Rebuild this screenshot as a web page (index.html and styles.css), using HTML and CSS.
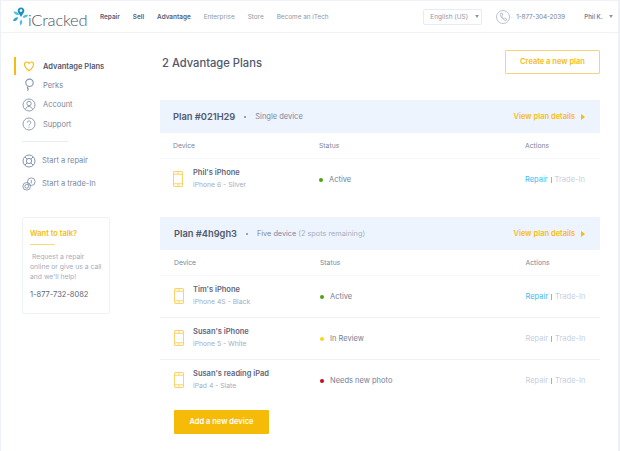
FILE: index.html
```html
<!DOCTYPE html>
<html lang="en">
<head>
    <meta charset="UTF-8">
    <meta name="viewport" content="width=device-width, initial-scale=1.0">
    <title>iCracked - Advantage Plans</title>
    <link rel="stylesheet" href="styles.css">
</head>
<body>
    <div class="page">
        <header class="topbar">
            <a class="logo">
                <svg width="15" height="19" viewBox="0 0 15 19">
                    <path d="M8 .5C6 .5 4.700 2 4.700 3.700 4.700 5.800 6.700 7.300 8 10 9.300 7.300 11.300 5.800 11.300 3.700 11.300 2 10 .5 8 .5z" fill="#1f8fbc"/>
                    <circle cx="8" cy="3.600" r="1.300" fill="#fff"/>
                    <path d="M.5 4.500c2.500-.3 4.700.9 5.600 3.200-2.500.8-4.700-.3-5.600-3.200z" fill="#45c0e8"/>
                    <path d="M0 14c.6-2.500 2.700-3.900 5.200-3.600-.7 2.500-2.700 4.100-5.200 3.600z" fill="#2aa5d2"/>
                    <path d="M7.500 18.500c-1.200-2-.8-4.300 .9-5.900 1.200 2.100.8 4.500-.9 5.900z" fill="#45c0e8"/>
                    <path d="M15 8c-2.200-.6-4.200.2-5.400 2.200 2 1.100 4.200.5 5.400-2.200z" fill="#45c0e8"/>
                </svg>
                <span class="logo-text">iCracked</span>
            </a>
            <nav class="mainnav">
                <a class="strong">Repair</a>
                <a class="strong">Sell</a>
                <a class="strong">Advantage</a>
                <a>Enterprise</a>
                <a>Store</a>
                <a>Become an iTech</a>
            </nav>
            <div class="lang">English (US) <i class="caret"></i></div>
            <div class="phone">
                <svg width="14" height="14" viewBox="0 0 14 14" fill="none" stroke="#a9b4c8" stroke-width=".8">
                    <circle cx="7" cy="7" r="6.500"/>
                    <path d="M4.500 3.500c-.8 2.800 2.400 6.800 5.600 7l.6-1.500-1.900-1.100-.8.800C7 8 6 6.700 5.800 5.500l1-.5L6 3z"/>
                </svg>
                <span>1-877-304-2039</span>
            </div>
            <div class="user">Phil K. <i class="caret"></i></div>
        </header>

        <div class="content">
            <aside class="sidebar">
                <ul class="sidenav">
                    <li class="active">
                        <svg width="14" height="14" viewBox="0 0 14 14" fill="none" stroke="#f5bc13" stroke-width="1.100">
                            <path d="M7 11.800C4 9.500 2.500 7.700 2.500 5.500 2.500 4 3.600 3 4.800 3 5.800 3 6.600 3.600 7 4.500 7.400 3.600 8.200 3 9.200 3 10.400 3 11.500 4 11.500 5.500 11.500 7.700 10 9.500 7 11.800z"/>
                        </svg>
                        Advantage Plans
                    </li>
                    <li>
                        <svg width="14" height="14" viewBox="0 0 14 14" fill="none" stroke="#8594ae" stroke-width="1.100">
                            <circle cx="7.500" cy="4.800" r="3.700"/>
                            <path d="M6.300 8.500l-1 1.500 1 .9-.8 1.900"/>
                        </svg>
                        Perks
                    </li>
                    <li>
                        <svg width="14" height="14" viewBox="0 0 14 14" fill="none" stroke="#8594ae" stroke-width=".9">
                            <circle cx="7" cy="7" r="6"/>
                            <circle cx="7" cy="5.500" r="2.200"/>
                            <path d="M3.500 11.500c.5-2 1.800-3 3.500-3s3 1 3.500 3"/>
                        </svg>
                        Account
                    </li>
                    <li>
                        <svg width="14" height="14" viewBox="0 0 14 14" fill="none" stroke="#8594ae" stroke-width=".9">
                            <circle cx="7" cy="7" r="6"/>
                            <path d="M5.200 5.600C5.300 4.500 6 4 7 4s1.800.6 1.800 1.600C8.800 7 7 7 7 8.500M7 9.700v1"/>
                        </svg>
                        Support
                    </li>
                </ul>
                <div class="sidediv"></div>
                <ul class="sideactions">
                    <li>
                        <svg width="14" height="14" viewBox="0 0 14 14" fill="none" stroke="#8594ae" stroke-width="1">
                            <circle cx="7" cy="7" r="6"/>
                            <circle cx="7" cy="7" r="2.600"/>
                            <path d="M3 3l2.200 2.200M11 3L8.800 5.200M3 11l2.200-2.200M11 11L8.800 8.800"/>
                        </svg>
                        Start a repair
                    </li>
                    <li>
                        <svg width="14" height="14" viewBox="0 0 14 14" fill="none" stroke="#8594ae" stroke-width=".9">
                            <circle cx="9.300" cy="4.700" r="3.800"/>
                            <circle cx="4.700" cy="9.300" r="3.800"/>
                            <circle cx="4.700" cy="9.300" r="1.900"/>
                            <path d="M9.300 3v3.400"/>
                        </svg>
                        Start a trade-In
                    </li>
                </ul>
                <div class="talk">
                    <h4>Want to talk?</h4>
                    <p>&nbsp;Request a repair<br>online or give us a call<br>and we'll help!</p>
                    <div class="talk-phone">1-877-732-8082</div>
                </div>
            </aside>

            <main class="main">
                <div class="titlebar">
                    <h1>2 Advantage Plans</h1>
                    <a class="btn-outline">Create a new plan</a>
                </div>

                <section class="plan">
                    <div class="plan-head">
                        <span class="plan-name">Plan #021H29</span>
                        <span class="dot-sep"></span>
                        <span class="plan-type">Single device</span>
                        <a class="plan-link">View plan details <i class="arrow"></i></a>
                    </div>
                    <div class="row row-head">
                        <span>Device</span><span>Status</span><span>Actions</span>
                    </div>
                    <div class="row row-device">
                        <div class="device">
                            <svg class="phone-icon" width="10" height="16" viewBox="0 0 10 16" fill="none" stroke="#fad36a" stroke-width="1.100">
                                <rect x=".5" y=".5" width="9" height="15" rx="1.500"/>
                                <path d="M.5 3.200h9M.5 12.800h9M5 .5v2.700M5 12.800v2.700"/>
                            </svg>
                            <div><b>Phil's iPhone</b><small>iPhone 6 - Silver</small></div>
                        </div>
                        <div class="status"><i class="green"></i>Active</div>
                        <div class="actions"><a class="live">Repair</a><em></em><a>Trade-In</a></div>
                    </div>
                </section>

                <section class="plan plan-two">
                    <div class="plan-head">
                        <span class="plan-name">Plan #4h9gh3</span>
                        <span class="dot-sep"></span>
                        <span class="plan-type">Five device <span class="muted">(2 spots remaining)</span></span>
                        <a class="plan-link">View plan details <i class="arrow"></i></a>
                    </div>
                    <div class="row row-head">
                        <span>Device</span><span>Status</span><span>Actions</span>
                    </div>
                    <div class="row row-device line">
                        <div class="device">
                            <svg class="phone-icon" width="10" height="16" viewBox="0 0 10 16" fill="none" stroke="#fad36a" stroke-width="1.100">
                                <rect x=".5" y=".5" width="9" height="15" rx="1.500"/>
                                <path d="M.5 3.200h9M.5 12.800h9M5 .5v2.700M5 12.800v2.700"/>
                            </svg>
                            <div><b>Tim's iPhone</b><small>iPhone 4S - Black</small></div>
                        </div>
                        <div class="status"><i class="green"></i>Active</div>
                        <div class="actions"><a class="live">Repair</a><em></em><a>Trade-In</a></div>
                    </div>
                    <div class="row row-device line">
                        <div class="device">
                            <svg class="phone-icon" width="10" height="16" viewBox="0 0 10 16" fill="none" stroke="#fad36a" stroke-width="1.100">
                                <rect x=".5" y=".5" width="9" height="15" rx="1.500"/>
                                <path d="M.5 3.200h9M.5 12.800h9M5 .5v2.700M5 12.800v2.700"/>
                            </svg>
                            <div><b>Susan's iPhone</b><small>iPhone 5 - White</small></div>
                        </div>
                        <div class="status"><i class="yellow"></i>In Review</div>
                        <div class="actions"><a>Repair</a><em></em><a>Trade-In</a></div>
                    </div>
                    <div class="row row-device">
                        <div class="device">
                            <svg class="phone-icon" width="10" height="16" viewBox="0 0 10 16" fill="none" stroke="#fad36a" stroke-width="1.100">
                                <rect x=".5" y=".5" width="9" height="15" rx="1.500"/>
                                <path d="M.5 3.200h9M.5 12.800h9M5 .5v2.700M5 12.800v2.700"/>
                            </svg>
                            <div><b>Susan's reading iPad</b><small>iPad 4 - Slate</small></div>
                        </div>
                        <div class="status"><i class="red"></i>Needs new photo</div>
                        <div class="actions"><a>Repair</a><em></em><a>Trade-In</a></div>
                    </div>
                    <a class="btn-solid">Add a new device</a>
                </section>
            </main>
        </div>
    </div>
</body>
</html>
```
FILE: styles.css
```css
html, body {
    margin: 0;
    height: 100%;
    overflow: hidden;
    background-color: #fff;
}
body {
    font-family: Inter, "Open Sans", sans-serif;
    font-size: 8px;
    color: #6f7b92;
    white-space: nowrap;
}
.page {
    width: 620px;
    height: 451px;
    box-sizing: border-box;
    border-top: 1px solid #f0f2f7;
    border-left: 1px solid #edf0f6;
    border-right: 2px solid #edf0f6;
    overflow: hidden;
}
ul {
    list-style: none;
    margin: 0;
    padding: 0;
}

/* top bar */
.topbar {
    display: flex;
    align-items: center;
    height: 32px;
    box-sizing: border-box;
    border-bottom: 1px solid #f0f2f7;
    padding-left: 12px;
}
.logo {
    display: flex;
    align-items: center;
    width: 87px;
    flex-shrink: 0;
}
.logo-text {
    font-family: Lato, sans-serif;
    font-size: 16.500px;
    font-weight: 300;
    color: #4a5364;
    line-height: 20px;
    margin: 6px 0 0 0;
    letter-spacing: -.2px;
}
.mainnav {
    display: flex;
    gap: 13px;
    font-size: 6.400px;
    color: #8d97aa;
}
.mainnav .strong {
    color: #566076;
    font-weight: 600;
}
.lang {
    margin-left: auto;
    width: 59px;
    height: 16px;
    flex-shrink: 0;
    box-sizing: border-box;
    border: 1px solid #e6ebf4;
    border-radius: 2px;
    font-size: 6.500px;
    line-height: 14px;
    padding-left: 6px;
    color: #8d97aa;
}
.caret {
    display: inline-block;
    border-left: 2px solid transparent;
    border-right: 2px solid transparent;
    border-top: 3px solid #8d9ab5;
    margin-left: 5px;
    vertical-align: 1px;
}
.phone {
    display: flex;
    align-items: center;
    gap: 6px;
    margin-left: 14px;
    font-size: 6.500px;
    letter-spacing: -.2px;
    color: #7a859b;
}
.user {
    margin: 0 5px 0 19.500px;
    font-size: 6px;
    font-weight: 600;
    color: #7a859b;
}

/* sidebar */
.content {
    display: flex;
}
.sidebar {
    width: 159px;
    flex-shrink: 0;
    padding-top: 24px;
    box-sizing: border-box;
}
.sidenav li,
.sideactions li {
    display: flex;
    align-items: center;
    font-size: 7.500px;
    color: #7b869c;
}
.sidenav li {
    height: 19.500px;
    margin-left: 13px;
    padding-left: 6px;
    gap: 7px;
    border-left: 2px solid transparent;
}
.sidenav li.active {
    border-left-color: #f5bc13;
    font-weight: 600;
    color: #4f586c;
    height: 18px;
    margin-bottom: .5px;
}
.sidediv {
    width: 46px;
    height: 1px;
    background-color: #e8ecf4;
    margin: 7px 0 0 21px;
}
.sideactions {
    margin-top: 7px;
    padding-left: 21px;
}
.sideactions li {
    height: 23px;
    gap: 6px;
}
.talk {
    width: 88px;
    height: 97px;
    box-sizing: border-box;
    margin: 22px 0 0 21px;
    padding: 11px 7px 0;
    border: 1px solid #eef2f9;
    border-radius: 2px;
}
.talk h4 {
    margin: 0;
    font-size: 7.500px;
    font-weight: 600;
    color: #f5bc13;
}
.talk h4::after {
    content: "";
    display: block;
    width: 25px;
    height: 1px;
    background-color: #f9da7a;
    margin-top: 6px;
}
.talk p {
    margin: 7px 0 0;
    font-size: 6.800px;
    line-height: 10px;
    color: #a3aec2;
}
.talk-phone {
    margin-top: 8px;
    font-size: 7.500px;
    color: #5d667a;
}

/* main column */
.main {
    width: 440px;
}
.titlebar {
    display: flex;
    justify-content: space-between;
    align-items: center;
    height: 24px;
    margin-top: 17px;
}
.titlebar h1 {
    margin: 1px 0 0 2px;
    font-size: 11.200px;
    font-weight: 500;
    color: #4f586c;
}
.btn-outline {
    width: 95px;
    height: 24px;
    box-sizing: border-box;
    border: 1px solid #f8d27b;
    border-radius: 1px;
    font-size: 7.500px;
    font-weight: 600;
    line-height: 22px;
    text-align: center;
    color: #f5bc13;
}
.plan {
    margin-top: 26px;
}
.plan-two {
    margin-top: 17px;
}
.plan-head {
    display: flex;
    align-items: center;
    height: 33px;
    background-color: #eef4fd;
    padding-left: 13px;
    box-sizing: border-box;
}
.plan-name {
    font-size: 9.300px;
    font-weight: 600;
    color: #505a6e;
}
.dot-sep {
    width: 2px;
    height: 2px;
    border-radius: 50%;
    background-color: #7b869c;
    margin: 0 9px;
}
.plan-type {
    font-size: 7.500px;
    color: #7b869c;
}
.plan-two .plan-type {
    font-size: 7.300px;
}
.muted {
    color: #a3aec2;
}
.plan-link {
    margin-left: auto;
    margin-right: 15px;
    font-size: 7.500px;
    font-weight: 600;
    color: #f5bc13;
}
.arrow {
    display: inline-block;
    border-top: 3px solid transparent;
    border-bottom: 3px solid transparent;
    border-left: 4px solid #f5bc13;
    margin-left: 4px;
    vertical-align: -1px;
}
.row {
    display: grid;
    grid-template-columns: 146px 206px 1fr;
    align-items: center;
    padding-left: 13px;
}
.row-head {
    height: 25px;
    border-bottom: 1px solid #f5f7fb;
    font-size: 6.800px;
    color: #7b869c;
}
.row-device {
    height: 41px;
    font-size: 7.500px;
}
.row-device.line {
    border-bottom: 1px solid #eff1f6;
}
.plan-two .plan-head,
.plan-two .row {
    padding-left: 14px;
}
.plan-two .row {
    grid-template-columns: 146px 205.500px 1fr;
}
.device {
    display: flex;
    align-items: center;
    gap: 10px;
    margin-bottom: 2px;
}
.plan-two .device {
    gap: 9px;
}
.device b {
    display: block;
    font-size: 7.500px;
    font-weight: 600;
    color: #5d667a;
}
.device small {
    display: block;
    margin-top: 3px;
    font-size: 6.800px;
    color: #a3aec2;
}
.status {
    display: flex;
    align-items: center;
    color: #737e94;
}
.status i {
    width: 4px;
    height: 4px;
    border-radius: 50%;
    margin-right: 6px;
}
.green { background-color: #4fa30c; }
.yellow { background-color: #f6d90f; }
.red { background-color: #c8081c; }
.actions {
    display: flex;
    align-items: center;
    color: #c6cfdd;
}
.actions .live {
    color: #3dbcf0;
}
.actions em {
    width: 1px;
    height: 6px;
    background-color: #a3aec2;
    margin: 0 3px;
}
.btn-solid {
    display: block;
    width: 95px;
    height: 24px;
    margin: 9px 0 0 14px;
    background-color: #f6bb08;
    border-radius: 1px;
    font-size: 7.500px;
    font-weight: 600;
    line-height: 24px;
    text-align: center;
    color: #fff;
}
```
